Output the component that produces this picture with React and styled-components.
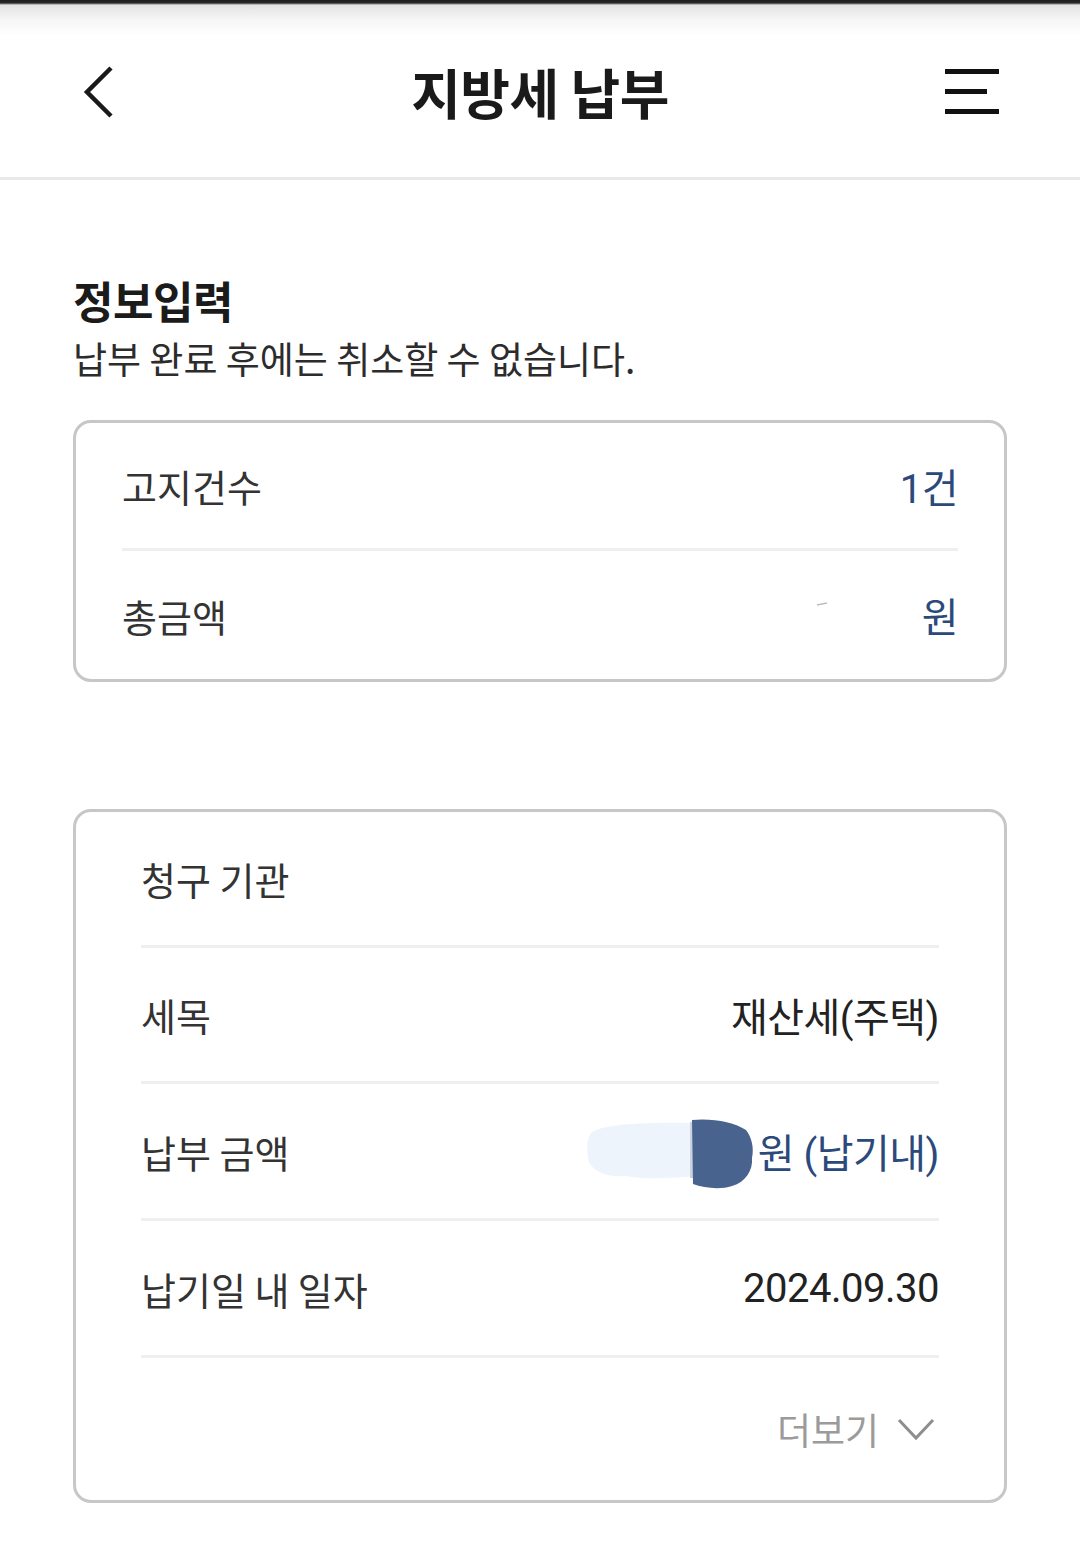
import React from 'react'
import styled, { createGlobalStyle } from 'styled-components'

const GlobalStyle = createGlobalStyle`
    html, body {
        margin:0;
        padding:0;
        background:#ffffff;
    }
    body {
        font-family:Roboto, "Noto Sans CJK KR", "Noto Sans", sans-serif;
        color:#222222;
        -webkit-font-smoothing:antialiased;
    }
`

const Page = styled.div`
    width:1080px;
    min-height:1568px;
    background:#ffffff;
`

const Header = styled.header`
    height:180px;
    box-sizing:border-box;
    padding-top:6px;
    display:flex;
    align-items:center;
    justify-content:space-between;
    border-bottom:3px solid #e9e9e9;
    background:linear-gradient(to bottom, #1c1c1c 0px, #2a2a2a 3px, #e4e4e4 5px, #f6f6f6 20px, #ffffff 36px);
`

const IconButton = styled.button`
    border:0;
    background:transparent;
    padding:0;
    display:flex;
    align-items:center;
    justify-content:${p => p.$align || 'center'};
    width:${p => p.$w}px;
    height:60px;
    margin:${p => p.$m};
    cursor:pointer;
`

const Title = styled.h1`
    margin:0;
    font-family:"Noto Sans CJK KR", sans-serif;
    font-size:54px;
    font-weight:700;
    letter-spacing:-0.5px;
    color:#1a1a1a;
`

const MenuBars = styled.div`
    display:flex;
    flex-direction:column;
    gap:15px;
    width:54px;
`

const Bar = styled.span`
    display:block;
    height:5px;
    width:${p => p.$w}px;
    background:#111111;
`

const Main = styled.main`
    padding:94px 73px 60px 73px;
`

const SectionTitle = styled.h2`
    margin:0;
    font-family:"Noto Sans CJK KR", sans-serif;
    font-size:44px;
    line-height:52px;
    font-weight:700;
    letter-spacing:-0.5px;
    color:#1b1b1b;
`

const SectionDesc = styled.p`
    margin:9px 0 0 0;
    font-family:"Noto Sans CJK KR", sans-serif;
    font-size:37px;
    line-height:46px;
    font-weight:400;
    color:#2c2c2c;
`

const Card = styled.section`
    margin-top:${p => p.$top}px;
    border:3px solid #c7c7c7;
    border-radius:18px;
    padding:0 ${p => p.$pad}px;
`

const Row = styled.div`
    display:flex;
    align-items:center;
    justify-content:space-between;
    height:${p => p.$h}px;
    border-bottom:${p => p.$last ? 'none' : '3px solid #efefef'};
`

const Label = styled.span`
    font-family:"Noto Sans CJK KR", sans-serif;
    font-size:38px;
    font-weight:400;
    color:#333333;
`

const Value = styled.span`
    display:flex;
    align-items:center;
    font-size:40px;
    font-weight:400;
    letter-spacing:-0.5px;
    color:${p => p.$accent ? '#2b4a7b' : '#222222'};
`

const MoreRow = styled.div`
    display:flex;
    align-items:center;
    justify-content:flex-end;
    gap:18px;
    height:142px;
    font-family:"Noto Sans CJK KR", sans-serif;
    font-size:37px;
    color:#9b9b9b;
    padding-right:4px;
`

const Redacted = styled.svg`
    display:block;
    margin-right:2px;
    margin-top:6px;
`

const Speck = styled.svg`
    display:block;
    margin-right:94px;
    margin-bottom:22px;
`

const BackIcon = () => (
    <svg width="36" height="54" viewBox="0 0 36 54">
        <path d="M31 3 L7 27 L31 51" fill="none" stroke="#1a1a1a" strokeWidth="4.5" strokeLinecap="butt" strokeLinejoin="miter" />
    </svg>
)

const ChevronDown = () => (
    <svg width="38" height="24" viewBox="0 0 38 24">
        <path d="M2 3 L19 21 L36 3" fill="none" stroke="#8e8e8e" strokeWidth="3" />
    </svg>
)

const RedactionSmear = () => (
    <Redacted width="170" height="72" viewBox="0 0 170 72">
        <path d="M6 14 C20 6 60 4 112 5 L112 58 C90 60 60 62 40 58 C20 60 2 52 2 38 C0 28 2 18 6 14 Z" fill="#edf4fb" />
        <rect x="104" y="4" width="3" height="56" fill="#c9d3e2" />
        <path d="M106 2 C126 0 148 4 160 12 C166 20 168 30 166 40 C167 52 160 64 146 68 C134 72 118 70 107 66 Z" fill="#49638f" />
    </Redacted>
)

const App = () => {
    return (
        <Page>
            <GlobalStyle />
            <Header>
                <IconButton $w={55} $align="flex-start" $m="0 0 0 80px" aria-label="back">
                    <BackIcon />
                </IconButton>
                <Title>지방세 납부</Title>
                <IconButton $w={54} $m="0 81px 0 0" aria-label="menu">
                    <MenuBars>
                        <Bar $w={54} />
                        <Bar $w={42} />
                        <Bar $w={54} />
                    </MenuBars>
                </IconButton>
            </Header>

            <Main>
                <SectionTitle>정보입력</SectionTitle>
                <SectionDesc>납부 완료 후에는 취소할 수 없습니다.</SectionDesc>

                <Card $top={39} $pad={46}>
                    <Row $h={125}>
                        <Label>고지건수</Label>
                        <Value $accent>1건</Value>
                    </Row>
                    <Row $h={128} $last>
                        <Label>총금액</Label>
                        <Value $accent>
                            <Speck width="12" height="4" viewBox="0 0 12 4">
                                <path d="M1 3 L11 1" stroke="#b9bec6" strokeWidth="1.5" />
                            </Speck>
                            원
                        </Value>
                    </Row>
                </Card>

                <Card $top={127} $pad={65}>
                    <Row $h={133}>
                        <Label>청구 기관</Label>
                    </Row>
                    <Row $h={133}>
                        <Label>세목</Label>
                        <Value>재산세(주택)</Value>
                    </Row>
                    <Row $h={134}>
                        <Label>납부 금액</Label>
                        <Value $accent>
                            <RedactionSmear />
                            원 (납기내)
                        </Value>
                    </Row>
                    <Row $h={134}>
                        <Label>납기일 내 일자</Label>
                        <Value>2024.09.30</Value>
                    </Row>
                    <MoreRow>
                        <span>더보기</span>
                        <ChevronDown />
                    </MoreRow>
                </Card>
            </Main>
        </Page>
    )
}

export default App
